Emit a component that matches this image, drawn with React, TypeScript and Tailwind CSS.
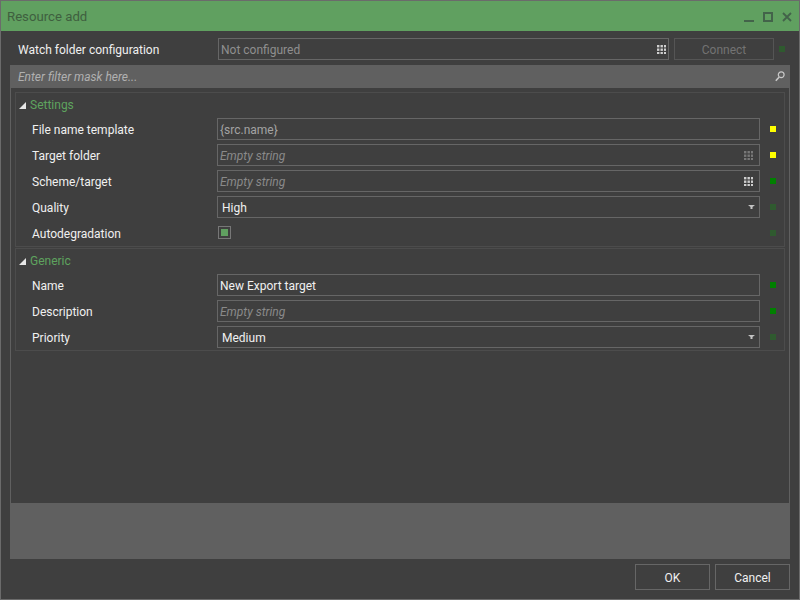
import React from 'react';

const font = "font-['Roboto',sans-serif]";

const GridIcon = ({ dim }: { dim?: boolean }) => (
  <svg width="9" height="9" viewBox="0 0 9 9" className={dim ? 'opacity-40' : ''}>
    {[0, 3.5, 7].map((y) =>
      [0, 3.5, 7].map((x) => <rect key={`${x}-${y}`} x={x} y={y} width="2.4" height="2.4" fill="#cfcfcf" />)
    )}
  </svg>
);

const Caret = () => (
  <svg width="7" height="4" viewBox="0 0 7 4">
    <path d="M0 0h7L4.5 2v2h-2V2z" fill="#c4c4c4" />
  </svg>
);

const Dot = ({ color }: { color: string }) => <div className={`w-[6px] h-[6px] shrink-0 ${color}`} />;

const Expander = () => (
  <svg width="7" height="7" viewBox="0 0 7 7">
    <path d="M7 0v7H0z" fill="#e6e6e6" />
  </svg>
);

const Row = ({ label, children, dot }: { label: string; children: React.ReactNode; dot: string }) => (
  <div className="flex items-center h-[22px]">
    <div className="w-[201px] pl-[16px] pt-[2px] text-[12px] text-[#f0f0f0] shrink-0">{label}</div>
    <div className="w-[543px] h-[22px] shrink-0 flex items-center">{children}</div>
    <div className="ml-[10px]">
      <Dot color={dot} />
    </div>
  </div>
);

const Field = ({ text, tone, icon }: { text: string; tone: string; icon?: React.ReactNode }) => (
  <div className="w-full h-full border border-[#666666] flex items-center justify-between pl-[2px] pr-[6px]">
    <span className={`pt-[2px] text-[12px] ${tone}`}>{text}</span>
    {icon}
  </div>
);

const Select = ({ text }: { text: string }) => (
  <div className="w-full h-full border border-[#666666] flex items-center justify-between pl-[4px] pr-[4px]">
    <span className="pt-[2px] text-[#f0f0f0] text-[12px]">{text}</span>
    <Caret />
  </div>
);

const Group = ({ title, children, h }: { title: string; children: React.ReactNode; h: string }) => (
  <div className={`border border-[#4c4c4c] ${h}`}>
    <div className="flex items-center h-[24px] pl-[3px] gap-[4px]">
      <Expander />
      <span className="text-[12px] text-[#5ea35e]">{title}</span>
    </div>
    <div className="flex flex-col gap-[4px] pt-[1px]">{children}</div>
  </div>
);

const placeholder = 'italic text-[#8a8a8a]';

export default function App() {
  return (
    <div className={`w-[800px] h-[600px] bg-[#3f3f3f] border border-[#6b6b6b] flex flex-col overflow-hidden ${font}`}>
      {/* title bar */}
      <div className="h-[30px] bg-[#60a060] flex items-center justify-between shrink-0 pl-[6px] pr-[7px]">
        <span className="pt-[2px] text-[13.2px] text-[#3f5f3f]">Resource add</span>
        <div className="flex items-center gap-[9px] pt-[2px]">
          <svg width="10" height="10" viewBox="0 0 10 10"><rect x="0" y="8" width="10" height="2" fill="#43634a" /></svg>
          <svg width="10" height="10" viewBox="0 0 10 10"><rect x="1" y="1" width="8" height="8" fill="none" stroke="#43634a" strokeWidth="2" /></svg>
          <svg width="10" height="10" viewBox="0 0 10 10"><path d="M1 1l8 8M9 1l-8 8" stroke="#43634a" strokeWidth="1.8" /></svg>
        </div>
      </div>

      {/* watch folder */}
      <div className="flex items-center h-[22px] mt-[7px] shrink-0">
        <div className="w-[217px] pl-[17px] pt-[2px] text-[12px] text-[#f0f0f0]">Watch folder configuration</div>
        <div className="w-[451px] h-[22px] border border-[#666666] flex items-center justify-between pl-[2px] pr-[2px]">
          <span className="pt-[2px] text-[12px] text-[#8f8f8f]">Not configured</span>
          <GridIcon />
        </div>
        <div className="w-[100px] h-[22px] ml-[5px] pt-[2px] border border-[#555555] flex items-center justify-center text-[12px] text-[#737373]">Connect</div>
        <div className="ml-[5px]"><Dot color="bg-[#2f5a2f]" /></div>
      </div>

      {/* property grid */}
      <div className="mx-[9px] mt-[5px] h-[494px] bg-[#606060] shrink-0 flex flex-col">
        <div className="h-[23px] flex items-center justify-between pl-[8px] pr-[5px] shrink-0">
          <span className="italic text-[12px] text-[#b0b0b0]">Enter filter mask here...</span>
          <svg width="10" height="11" viewBox="0 0 10 11" fill="none" stroke="#c8c8c8">
            <circle cx="6.2" cy="3.8" r="2.9" strokeWidth="1.2" />
            <path d="M4 6.2L0.8 9.8" strokeWidth="1.6" />
          </svg>
        </div>
        <div className="mx-[1px] h-[415px] bg-[#3f3f3f] px-[4px] pt-[4px] flex flex-col gap-[1px] shrink-0">
          <Group title="Settings" h="h-[155px]">
            <Row label="File name template" dot="bg-[#ffff00]">
              <Field text="{src.name}" tone="text-[#a3a3a3]" />
            </Row>
            <Row label="Target folder" dot="bg-[#ffff00]">
              <Field text="Empty string" tone={placeholder} icon={<GridIcon dim />} />
            </Row>
            <Row label="Scheme/target" dot="bg-[#008000]">
              <Field text="Empty string" tone={placeholder} icon={<GridIcon />} />
            </Row>
            <Row label="Quality" dot="bg-[#2f5a2f]">
              <Select text="High" />
            </Row>
            <Row label="Autodegradation" dot="bg-[#2f5a2f]">
              <div className="w-[13px] h-[13px] ml-[1px] mb-[2px] border border-[#777777] flex items-center justify-center">
                <div className="w-[7px] h-[7px] bg-[#60a060]" />
              </div>
            </Row>
          </Group>
          <Group title="Generic" h="h-[103px]">
            <Row label="Name" dot="bg-[#008000]">
              <Field text="New Export target" tone="text-[#f0f0f0]" />
            </Row>
            <Row label="Description" dot="bg-[#008000]">
              <Field text="Empty string" tone={placeholder} />
            </Row>
            <Row label="Priority" dot="bg-[#2f5a2f]">
              <Select text="Medium" />
            </Row>
          </Group>
        </div>
      </div>

      {/* buttons */}
      <div className="flex justify-end gap-[5px] mt-[5px] mr-[9px] shrink-0">
        <div className="w-[75px] h-[26px] pt-[2px] border border-[#666666] flex items-center justify-center text-[12px] text-[#f0f0f0]">OK</div>
        <div className="w-[75px] h-[26px] pt-[2px] border border-[#666666] flex items-center justify-center text-[12px] text-[#f0f0f0]">Cancel</div>
      </div>
    </div>
  );
}
